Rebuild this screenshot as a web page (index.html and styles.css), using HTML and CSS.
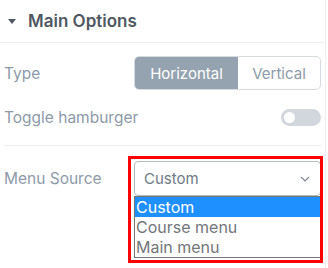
FILE: index.html
```html
<!DOCTYPE html>
<html>
<head>
  <title>Main Options</title>
  <link rel="stylesheet" href="styles.css">
</head>
<body>
  <div class="panel">
    <!-- Section header -->
    <div class="section-head">
      <span class="caret"></span>
      <span class="section-title">Main Options</span>
    </div>

    <div class="section-body">
      <div class="row row-type">
        <span class="label">Type</span>
        <div class="segmented">
          <span class="segment active">Horizontal</span>
          <span class="segment">Vertical</span>
        </div>
      </div>

      <div class="row row-toggle">
        <span class="label">Toggle hamburger</span>
        <span class="switch"><span class="knob"></span></span>
      </div>

      <div class="divider"></div>

      <div class="row row-source">
        <span class="label">Menu Source</span>
        <div class="select-wrap">
          <div class="select">
            <span class="select-value">Custom</span>
            <svg class="chevron" width="10" height="6" viewBox="0 0 10 6">
              <path d="M1 1 L5 5 L9 1" fill="none" stroke="#7d8893" stroke-width="1.2"/>
            </svg>
          </div>
          <!-- open dropdown list -->
          <ul class="options">
            <li class="option selected">Custom</li>
            <li class="option">Course menu</li>
            <li class="option">Main menu</li>
          </ul>
          <div class="highlight-box"></div>
        </div>
      </div>
    </div>
  </div>
</body>
</html>
```

FILE: styles.css
```css
html, body {
  height: 100%;
  margin: 0;
  padding: 0;
}

body {
  background-color: #fff;
  font-family: 'Inter', 'Noto Sans', sans-serif;
  overflow: hidden;
}

/* Side panel */
.panel {
  width: 325px;
  height: 100%;
  border-right: 1px solid #eceef1;
}

/* Section header */
.section-head {
  display: flex;
  align-items: center;
  height: 43px;
  padding-left: 8px;
  border-bottom: 1px solid #eceef1;
  box-sizing: border-box;
}

.caret {
  width: 0;
  height: 0;
  border-left: 4px solid transparent;
  border-right: 4px solid transparent;
  border-top: 5px solid #4f5862;
  margin-right: 12px;
}

.section-title {
  font-size: 17px;
  font-weight: 600;
  color: #4f5862;
}

/* Section body */
.section-body {
  padding: 0 4px;
}

.row {
  display: flex;
  align-items: center;
  justify-content: space-between;
}

.label {
  font-size: 15.5px;
  color: #8d9aa9;
}

.row-type {
  margin-top: 13px;
}

.row-toggle {
  margin-top: 18px;
}

/* Segmented control */
.segmented {
  display: flex;
  width: 187px;
  height: 34px;
  border: 1px solid #d6dbe0;
  border-radius: 5px;
  box-sizing: border-box;
  overflow: hidden;
}

.segment {
  display: flex;
  align-items: center;
  justify-content: center;
  font-size: 15px;
  color: #8d9aa9;
}

.segment:first-child {
  width: 103px;
}

.segment:last-child {
  flex-grow: 1;
}

.segment.active {
  background-color: #95a3b0;
  color: #fff;
}

/* Toggle switch */
.switch {
  display: flex;
  align-items: center;
  width: 40px;
  height: 17px;
  border-radius: 9px;
  background-color: #d2d7dd;
  padding-left: 3px;
  box-sizing: border-box;
}

.knob {
  width: 11px;
  height: 11px;
  border-radius: 50%;
  background-color: #fff;
}

.divider {
  height: 1px;
  background-color: #eceef1;
  margin-top: 18px;
}

/* Menu source select */
.row-source {
  margin-top: 15px;
}

.select-wrap {
  position: relative;
  width: 187px;
}

.select {
  display: flex;
  align-items: center;
  justify-content: space-between;
  height: 35px;
  padding: 0 10px 0 9px;
  border: 1px solid #b3bbc3;
  border-radius: 4px;
  box-sizing: border-box;
}

.select-value {
  font-size: 15px;
  color: #6e7a86;
}

.options {
  position: absolute;
  top: 35px;
  left: 0;
  width: 187px;
  margin: 0;
  padding: 0;
  list-style: none;
  background-color: #fff;
  border: 1px solid #767676;
  box-sizing: border-box;
}

.option {
  height: 20px;
  line-height: 20px;
  padding-left: 1px;
  font-size: 16px;
  color: #73767a;
}

.option.selected {
  background-color: #1e90ff;
  color: #fff;
}

/* Red annotation outline */
.highlight-box {
  position: absolute;
  top: -5px;
  left: -6px;
  width: 195px;
  height: 107px;
  border: 3px solid #ff0000;
  box-sizing: border-box;
  pointer-events: none;
}
```
